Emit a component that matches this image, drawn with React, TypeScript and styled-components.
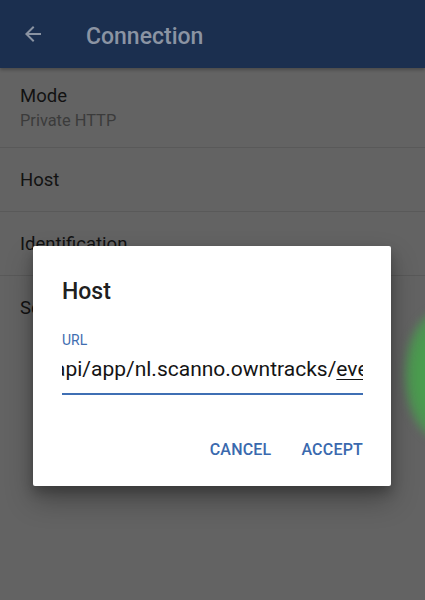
import React from "react";
import styled, { createGlobalStyle } from "styled-components";

const GlobalStyle = createGlobalStyle`
  html, body {
    margin: 0;
    padding: 0;
    background: #636363;
  }
  body {
    font-family: Roboto, "Noto Sans", "Liberation Sans", sans-serif;
  }
`;

const Screen = styled.div`
  position: relative;
  width: 425px;
  height: 600px;
  overflow: hidden;
  background: #636363;
  display: flex;
  flex-direction: column;
`;

const AppBar = styled.div`
  height: 68px;
  flex: none;
  display: flex;
  align-items: center;
  background: #1b2f4f;
  box-shadow: 0 2px 3px rgba(0, 0, 0, 0.25);
`;

const BackButton = styled.div`
  width: 24px;
  height: 24px;
  margin-left: 21px;
  margin-right: 41px;
  display: flex;
  color: #8a93a2;
`;

const AppTitle = styled.div`
  font-size: 23px;
  font-weight: 500;
  color: #8b94a3;
  margin-top: 5px;
`;

const List = styled.div`
  display: flex;
  flex-direction: column;
`;

const Row = styled.div<{ $tall?: boolean; $divider?: boolean }>`
  height: ${(p) => (p.$tall ? 79 : 63)}px;
  padding-left: 20px;
  display: flex;
  flex-direction: column;
  justify-content: center;
  border-bottom: 1px solid ${(p) => (p.$divider === false ? "transparent" : "#595959")};
`;

const RowTitle = styled.div`
  font-size: 18.5px;
  color: #121212;
  line-height: 24px;
`;

const RowSummary = styled.div`
  font-size: 16.4px;
  color: #3b3b3b;
  line-height: 22px;
  margin-top: 2px;
`;

const Glow = styled.div`
  position: absolute;
  left: 405px;
  top: 310px;
  width: 74px;
  height: 130px;
  border-radius: 50%;
  background: radial-gradient(ellipse at 60% 50%, #4ca451 0%, #4a9d4e 50%, #528a56 75%, rgba(99, 99, 99, 0) 100%);
  filter: blur(4px);
`;

const Dialog = styled.div`
  position: absolute;
  left: 33px;
  top: 246px;
  width: 358px;
  height: 240px;
  box-sizing: border-box;
  padding: 0 28px 0 29px;
  background: #ffffff;
  border-radius: 2px;
  box-shadow: 0 14px 28px rgba(0, 0, 0, 0.3), 0 6px 12px rgba(0, 0, 0, 0.22);
  display: flex;
  flex-direction: column;
`;

const DialogTitle = styled.div`
  margin-top: 33px;
  font-size: 23px;
  font-weight: 500;
  color: #202020;
  line-height: 26px;
`;

const FieldLabel = styled.div`
  margin-top: 27px;
  font-size: 14px;
  color: #3f6db0;
  line-height: 16px;
`;

const Field = styled.div`
  margin-top: 8px;
  width: 301px;
  height: 37px;
  overflow: hidden;
  white-space: nowrap;
  border-bottom: 2px solid #3f6fb4;
`;

const FieldText = styled.span`
  display: inline-block;
  margin-left: -8px;
  font-size: 21px;
  line-height: 26px;
  color: #141414;

  u {
    text-decoration-thickness: 1px;
    text-underline-offset: 3px;
  }
`;

const Actions = styled.div`
  margin-top: 46px;
  display: flex;
  justify-content: flex-end;
  gap: 30px;
`;

const ActionButton = styled.div`
  font-size: 16px;
  font-weight: 500;
  color: #3a69ae;
  letter-spacing: 0.2px;
  line-height: 18px;
`;

const ArrowBack = () => (
  <svg width="24" height="24" viewBox="0 0 24 24" fill="currentColor">
    <path d="M20 11H7.83l5.59-5.59L12 4l-8 8 8 8 1.41-1.41L7.83 13H20v-2z" />
  </svg>
);

const App: React.FC = () => {
  return (
    <>
      <GlobalStyle />
      <Screen>
        <AppBar>
          <BackButton>
            <ArrowBack />
          </BackButton>
          <AppTitle>Connection</AppTitle>
        </AppBar>
        <List>
          <Row $tall>
            <RowTitle>Mode</RowTitle>
            <RowSummary>Private HTTP</RowSummary>
          </Row>
          <Row>
            <RowTitle>Host</RowTitle>
          </Row>
          <Row>
            <RowTitle>Identification</RowTitle>
          </Row>
          <Row $divider={false}>
            <RowTitle>Security</RowTitle>
          </Row>
        </List>
        <Glow />
        <Dialog>
          <DialogTitle>Host</DialogTitle>
          <FieldLabel>URL</FieldLabel>
          <Field>
            <FieldText>
              api/app/nl.scanno.owntracks/<u>event</u>
            </FieldText>
          </Field>
          <Actions>
            <ActionButton>CANCEL</ActionButton>
            <ActionButton>ACCEPT</ActionButton>
          </Actions>
        </Dialog>
      </Screen>
    </>
  );
};

export default App;
